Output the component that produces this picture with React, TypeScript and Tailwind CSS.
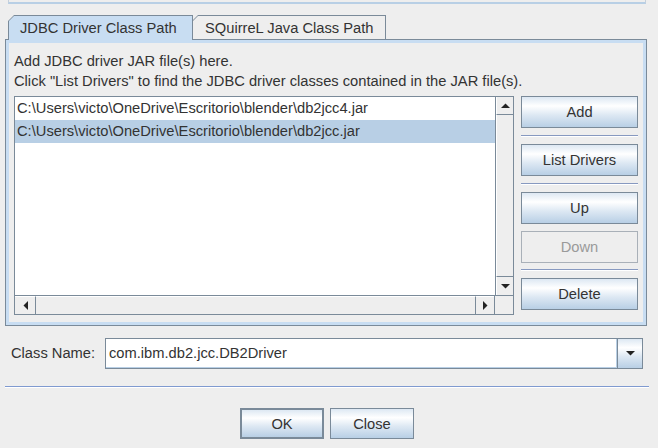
import type { ReactNode } from 'react'

const BTN_BG =
  'bg-[linear-gradient(to_bottom,#dde8f3_0%,#ffffff_30%,#dde8f3_60%,#b8cfe5_100%)]'

function Arrow({ dir }: { dir: 'up' | 'down' | 'left' | 'right' }) {
  const pts = {
    up: '0,5 4.5,0.5 9,5',
    down: '0,0 9,0 4.5,4.5',
    left: '5,0 5,9 0.5,4.5',
    right: '0,0 0,9 4.5,4.5',
  }[dir]
  const vertical = dir === 'up' || dir === 'down'
  return (
    <svg width={vertical ? 9 : 5} height={vertical ? 5 : 9} viewBox={vertical ? '0 0 9 5' : '0 0 5 9'}>
      <polygon points={pts} fill="#222" />
    </svg>
  )
}

function Button({ children, disabled }: { children: ReactNode; disabled?: boolean }) {
  if (disabled) {
    return (
      <div className="flex h-[32px] items-center justify-center border border-[#a9b0b8] bg-[#eeeeee] pt-[1px] text-[#9a9a9a]">
        {children}
      </div>
    )
  }
  return (
    <div className={`flex h-[32px] items-center justify-center border border-[#7a8a99] pt-[1px] ${BTN_BG}`}>
      {children}
    </div>
  )
}

function Sep({ className = '' }: { className?: string }) {
  return <div className={`h-[2px] border-t border-t-[#8799c0] border-b border-b-white ${className}`} />
}

const rows = [
  'C:\\Users\\victo\\OneDrive\\Escritorio\\blender\\db2jcc4.jar',
  'C:\\Users\\victo\\OneDrive\\Escritorio\\blender\\db2jcc.jar',
]

export default function App() {
  return (
    <div className="flex h-[448px] w-[658px] flex-col overflow-hidden bg-[#eeeeee] font-['Liberation_Sans',Arial,sans-serif] text-[14.7px] text-[#333333]">
      {/* strip of the panel above */}
      <div className="ml-[8px] h-[4px] w-[638px] border-x border-b-2 border-x-[#c4d0dc] border-b-[#b8cfe5]" />

      {/* tabs */}
      <div className="ml-[8px] mt-[11px] flex h-[24px] items-start">
        <div className="relative z-10 h-[25px] w-[185px] bg-[#7a8a99] [clip-path:polygon(6px_0,100%_0,100%_100%,0_100%,0_6px)]">
          <div className="absolute inset-x-[1px] bottom-0 top-[1px] bg-[#c8ddf2] pl-[11px] pt-[1px] leading-[23px] [clip-path:polygon(5px_0,100%_0,100%_100%,0_100%,0_5px)]">
            JDBC Driver Class Path
          </div>
        </div>
        <div className="relative -ml-[1px] h-[24px] w-[194px] bg-[#7a8a99] [clip-path:polygon(6px_0,100%_0,100%_100%,0_100%,0_6px)]">
          <div className="absolute inset-x-[1px] bottom-0 top-[1px] bg-[#eeeeee] pl-[12px] pt-[1px] leading-[23px] [clip-path:polygon(5px_0,100%_0,100%_100%,0_100%,0_5px)]">
            SQuirreL Java Class Path
          </div>
        </div>
      </div>

      {/* tab content */}
      <div className="ml-[5px] w-[642px] border border-[#7a8a99]">
        <div className="border-[3px] border-[#c8ddf2] pb-[7px] pt-[8px]">
          <div className="pl-[5px] leading-[20px]">
            <div>Add JDBC driver JAR file(s) here.</div>
            <div>Click "List Drivers" to find the JDBC driver classes contained in the JAR file(s).</div>
          </div>

          <div className="mt-[5px] flex gap-[7px] pl-[5px]">
            {/* list with scroll bars */}
            <div className="flex h-[219px] w-[500px] flex-col border border-[#7a8a99] bg-white">
              <div className="flex min-h-0 flex-1">
                <div className="flex-1">
                  {rows.map((r, i) => (
                    <div
                      key={r}
                      className={`h-[23px] whitespace-nowrap pl-[2px] leading-[23px] ${i === 1 ? 'bg-[#b8cfe5]' : ''}`}
                    >
                      {r}
                    </div>
                  ))}
                </div>
                <div className="flex w-[18px] flex-col border-l border-[#7a8a99] bg-[#eeeeee]">
                  <div className="flex h-[18px] items-center justify-center border-b border-[#7a8a99] border-l border-l-white">
                    <Arrow dir="up" />
                  </div>
                  <div className="flex-1 border-l border-l-white" />
                  <div className="flex h-[19px] items-center justify-center border-t border-[#7a8a99] border-l border-l-white">
                    <Arrow dir="down" />
                  </div>
                </div>
              </div>
              <div className="flex h-[19px] border-t border-[#7a8a99] bg-[#eeeeee]">
                <div className="flex w-[21px] items-center justify-center border-r border-[#7a8a99] border-t border-t-white">
                  <Arrow dir="left" />
                </div>
                <div className="flex-1 border-t border-t-white" />
                <div className="flex w-[19px] items-center justify-center border-l border-[#7a8a99] border-t border-t-white">
                  <Arrow dir="right" />
                </div>
                <div className="w-[19px] border-l border-[#7a8a99]" />
              </div>
            </div>

            {/* buttons */}
            <div className="flex w-[117px] flex-col">
              <Button>Add</Button>
              <Sep className="my-[7px]" />
              <Button>List Drivers</Button>
              <Sep className="my-[7px]" />
              <Button>Up</Button>
              <div className="h-[7px]" />
              <Button disabled>Down</Button>
              <Sep className="mb-[7px] mt-[6px]" />
              <Button>Delete</Button>
            </div>
          </div>
        </div>
      </div>

      {/* class name */}
      <div className="mt-[12px] flex items-center">
        <div className="w-[105px] pl-[11px]">Class Name:</div>
        <div className="flex h-[31px] w-[538px] border border-[#7a8a99] bg-white">
          <div className="flex flex-1 items-center border-b border-r border-[#b8cfe5] pl-[3px]">
            com.ibm.db2.jcc.DB2Driver
          </div>
          <div className={`flex w-[25px] items-center justify-center border-l border-[#7a8a99] ${BTN_BG}`}>
            <Arrow dir="down" />
          </div>
        </div>
      </div>

      <div className="ml-[5px] mt-[17px] h-[2px] w-[644px] border-t border-t-[#7f9ad0] border-b border-b-white" />

      <div className="ml-[5px] mt-[20px] flex w-[644px] justify-center gap-[6px]">
        <div className={`flex h-[31px] w-[84px] items-center justify-center border-2 border-[#7a8a99] pt-[1px] ${BTN_BG}`}>OK</div>
        <div className={`flex h-[31px] w-[84px] items-center justify-center border border-[#7a8a99] pt-[1px] ${BTN_BG}`}>Close</div>
      </div>
    </div>
  )
}
